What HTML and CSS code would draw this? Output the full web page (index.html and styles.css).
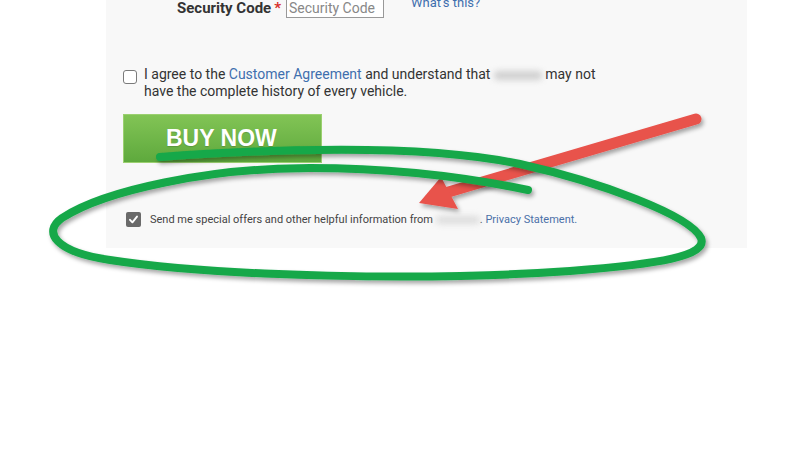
FILE: index.html
```html
<!DOCTYPE html>
<html lang="en">
<head>
    <meta charset="UTF-8">
    <meta name="viewport" content="width=device-width, initial-scale=1.0">
    <title>Checkout</title>
    <link rel="stylesheet" href="styles.css">
</head>
<body>
    <div class="page">
        <div class="panel">
            <div class="code-row">
                <label class="code-label">Security Code<span class="req">*</span></label>
                <input class="code-input" type="text" placeholder="Security Code">
                <a class="whats" href="#">What's this?</a>
            </div>

            <div class="agree">
                <span class="box"></span>
                <p>I agree to the <a href="#">Customer Agreement</a> and understand that <span class="hidden-name wide"></span> may not<br>have the complete history of every vehicle.</p>
            </div>

            <button class="buy" type="button">BUY NOW</button>

            <div class="offers">
                <span class="box checked">
                    <svg width="11" height="11" viewBox="0 0 11 11"><path d="M2 5.8 L4.4 8.3 L9 2.6" fill="none" stroke="#fff" stroke-width="1.9" stroke-linecap="round" stroke-linejoin="round"/></svg>
                </span>
                <p>Send me special offers and other helpful information from <span class="hidden-name small"></span>. <a href="#">Privacy Statement.</a></p>
            </div>
        </div>

        <!-- annotation drawn over the screenshot -->
        <svg class="marks" width="800" height="450" viewBox="0 0 800 450">
            <defs>
                <filter id="shadow" x="-10%" y="-20%" width="120%" height="150%">
                    <feDropShadow dx="2" dy="3" stdDeviation="2" flood-color="#000" flood-opacity="0.35"/>
                </filter>
            </defs>
            <g filter="url(#shadow)">
                <path d="M696 119 L445 193" stroke="#e8524b" stroke-width="11" stroke-linecap="round" fill="none"/>
                <polygon points="419,203 441,177 458,209" fill="#e8524b"/>
            </g>
            <path filter="url(#shadow)" d="M160 157 C 300 147 430 145 520 164 C 600 182 690 215 701 238 C 708 256 660 264 570 271 C 430 281 220 277 110 260 C 55 252 42 232 62 218 C 105 190 210 168 310 168 C 410 168 480 180 528 190" fill="none" stroke="#15a84a" stroke-width="8" stroke-linecap="round" stroke-linejoin="round"/>
        </svg>
    </div>
</body>
</html>
```

FILE: styles.css
```css
body {
    margin: 0;
    background: #fff;
    font-family: Roboto, "Liberation Sans", Arial, sans-serif;
    color: #333;
}
.page {
    position: relative;
    width: 800px;
    height: 450px;
    overflow: hidden;
}
.panel {
    display: flow-root;
    margin-left: 106px;
    width: 624px;
    height: 248px;
    padding-left: 17px;
    background: #f8f8f8;
}
a {
    color: #3f6fae;
    text-decoration: none;
}
.code-row {
    display: flex;
    align-items: center;
    margin-top: -3px;
    padding-left: 54px;
    height: 21px;
}
.code-label {
    font-weight: bold;
    font-size: 15px;
    color: #333;
}
.req {
    color: #d9302c;
    margin-left: 3px;
}
.code-input {
    margin-left: 5px;
    width: 92px;
    height: 17px;
    padding: 1px 2px;
    border: 1px solid #999;
    background: #fff;
    font-family: Roboto, "Liberation Sans", Arial, sans-serif;
    font-size: 14px;
}
.code-input::placeholder {
    color: #888;
}
.whats {
    align-self: flex-start;
    margin-top: -2px;
    margin-left: 27px;
    font-size: 13px;
}
.agree {
    display: flex;
    margin-top: 48px;
}
.agree p {
    margin: 0 0 0 7px;
    font-size: 14px;
    line-height: 17px;
}
.box {
    flex: none;
    box-sizing: border-box;
    width: 14px;
    height: 14px;
    margin-top: 4px;
    border: 1.5px solid #7a7a7a;
    border-radius: 3px;
    background: #fff;
}
.hidden-name {
    display: inline-block;
    vertical-align: middle;
    background: #cfcfcf;
    filter: blur(3px);
    border-radius: 4px;
}
.hidden-name.wide {
    width: 48px;
    height: 9px;
}
.hidden-name.small {
    width: 44px;
    height: 8px;
    background: #dcdcdc;
}
.buy {
    display: block;
    margin-top: 14px;
    width: 199px;
    height: 49px;
    padding: 0 0 0 42px;
    text-align: left;
    border: 1px solid #9bd070;
    background: linear-gradient(#82c455, #5ea93d);
    color: #fff;
    font-family: "Liberation Sans", Arial, sans-serif;
    font-weight: bold;
    font-size: 23px;
    text-shadow: 0 1px 1px rgba(0, 0, 0, 0.15);
    cursor: pointer;
}
.offers {
    display: flex;
    align-items: center;
    margin-top: 49px;
    padding-left: 3px;
}
.offers .box {
    width: 15px;
    height: 15px;
    margin-top: 0;
    display: flex;
    align-items: center;
    justify-content: center;
    border: none;
    border-radius: 2px;
    background: #6a6a6a;
}
.offers p {
    margin: 0 0 0 9px;
    font-size: 11px;
    line-height: 15px;
    color: #444;
}
.offers a {
    color: #4b70a8;
}
.marks {
    position: absolute;
    top: 0;
    left: 0;
    pointer-events: none;
}
```
